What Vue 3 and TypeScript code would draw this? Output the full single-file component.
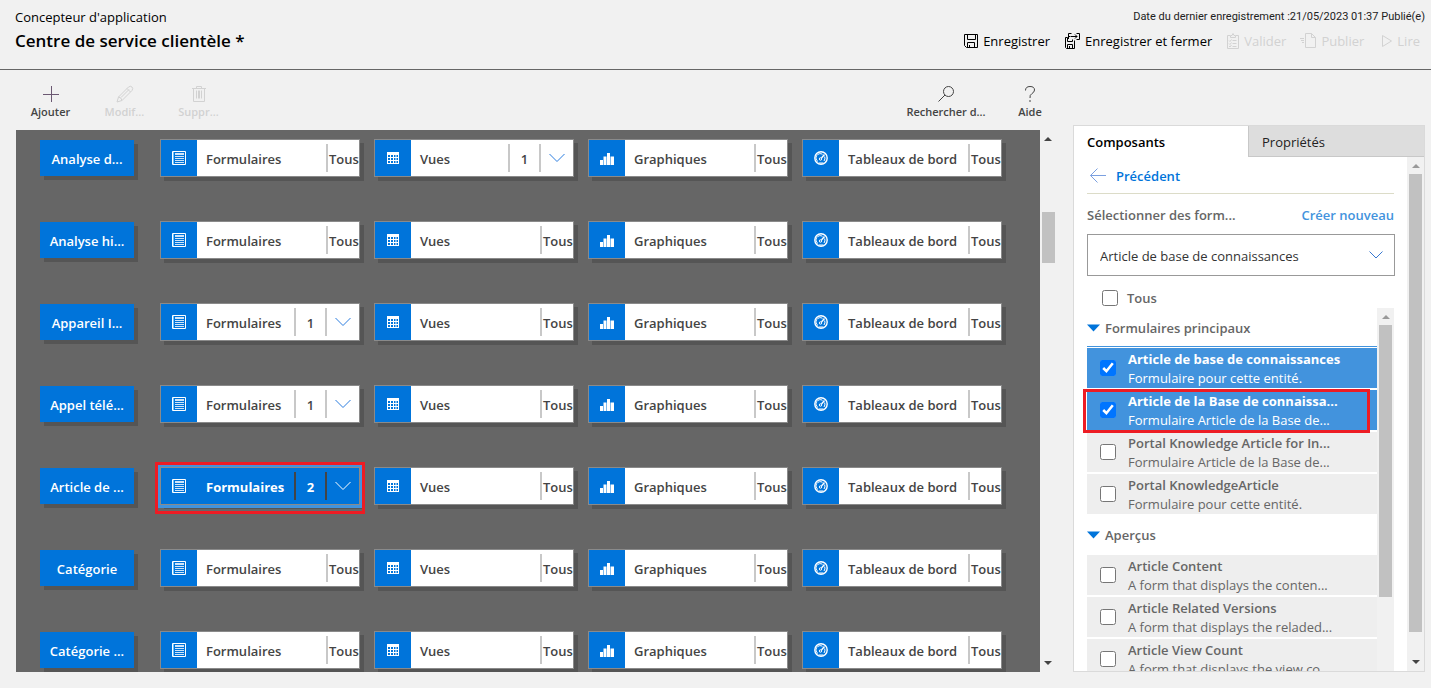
<script setup lang="ts">
import { ref } from 'vue'

type Kind = 'form' | 'view' | 'chart' | 'dash'

interface Card {
  kind: Kind
  label: string
  count?: number
  selected?: boolean
}

interface Row {
  name: string
  cards: Card[]
}

interface FormItem {
  title: string
  text: string
  checked: boolean
  marked?: boolean
  focused?: boolean
}

interface Group {
  name: string
  items: FormItem[]
}

function makeRow(name: string, forms?: number, views?: number, selected = false): Row {
  return {
    name,
    cards: [
      { kind: 'form', label: 'Formulaires', count: forms, selected },
      { kind: 'view', label: 'Vues', count: views },
      { kind: 'chart', label: 'Graphiques' },
      { kind: 'dash', label: 'Tableaux de bord' },
    ],
  }
}

const rows: Row[] = [
  makeRow('Analyse d...', undefined, 1),
  makeRow('Analyse hi...'),
  makeRow('Appareil I...', 1),
  makeRow('Appel télé...', 1),
  makeRow('Article de ...', 2, undefined, true),
  makeRow('Catégorie'),
  makeRow('Catégorie ...'),
]

const groups = ref<Group[]>([
  {
    name: 'Formulaires principaux',
    items: [
      { title: 'Article de base de connaissances', text: 'Formulaire pour cette entité.', checked: true, focused: true },
      { title: 'Article de la Base de connaissa...', text: 'Formulaire Article de la Base de...', checked: true, marked: true },
      { title: 'Portal Knowledge Article for In...', text: 'Formulaire Article de la Base de...', checked: false },
      { title: 'Portal KnowledgeArticle', text: 'Formulaire pour cette entité.', checked: false },
    ],
  },
  {
    name: 'Aperçus',
    items: [
      { title: 'Article Content', text: 'A form that displays the conten...', checked: false },
      { title: 'Article Related Versions', text: 'A form that displays the reladed...', checked: false },
      { title: 'Article View Count', text: 'A form that displays the view co...', checked: false },
    ],
  },
])

const all = ref(false)
const entity = ref('Article de base de connaissances')
</script>

<template>
  <div class="app">
    <header class="header">
      <div class="titles">
        <p class="product">Concepteur d'application</p>
        <h1 class="title">Centre de service clientèle *</h1>
      </div>
      <div class="header-right">
        <p class="saved">Date du dernier enregistrement :21/05/2023 01:37 Publié(e)</p>
        <div class="commands">
          <button class="command" type="button">
            <svg width="16" height="16" viewBox="0 0 16 16" fill="none" stroke="currentColor">
              <path d="M1.5 1.5h13v13h-11l-2-2zM4.500 1.500v5h8v-5M4.500 14.500v-5h7v5M6.500 12v2.500" />
            </svg>
            Enregistrer
          </button>
          <button class="command" type="button">
            <svg width="17" height="17" viewBox="0 0 17 17" fill="none" stroke="currentColor">
              <path d="M3.500 4.500h-2v10l1 1h8v-8M3.500 4.500v4h5v-2M3.500 15.500v-4h5v4M5.500 13v2.500M4.500 6V.500h3M4.500 3.500h2M12.500 .500h3v6h-3M7 3.500h6M11 1.500l2 2-2 2" />
            </svg>
            Enregistrer et fermer
          </button>
          <button class="command" type="button" disabled>
            <svg width="14" height="16" viewBox="0 0 14 16" fill="none" stroke="currentColor">
              <path d="M4 2.500H1.500v13h11v-13H10M4.500 4.500v-2h1.500l1-2 1 2h1.500v2zM3 7.500l1 1 1.500-2M6.500 7.500h4M3 10.500l1 1 1.500-2M6.500 10.500h4M3 13l1 1 1.500-2M6.500 13.500h4" />
            </svg>
            Valider
          </button>
          <button class="command" type="button" disabled>
            <svg width="17" height="16" viewBox="0 0 17 16" fill="none" stroke="currentColor">
              <path d="M5.500 .500h6l4 4v10h-10zM11.500 .500v4h4M0 5.500h4M1 7.500h3M2 9.500h2" />
            </svg>
            Publier
          </button>
          <button class="command play" type="button" disabled>
            <svg width="12" height="14" viewBox="0 0 12 14" fill="none" stroke="currentColor">
              <path d="M1.500 1.500v11l9-5.500z" />
            </svg>
            Lire
          </button>
        </div>
      </div>
    </header>

    <main class="main">
      <section class="work">
        <div class="toolbar">
          <button class="tool" type="button">
            <svg width="18" height="18" viewBox="0 0 18 18" fill="none" stroke="#6b5872">
              <path d="M1 9.500h16M9.500 1v16" />
            </svg>
            Ajouter
          </button>
          <button class="tool" type="button" disabled>
            <svg width="18" height="18" viewBox="0 0 18 18" fill="none" stroke="currentColor">
              <path d="M1 17l1.500-5L12.500 2q2-1.500 3.500 0t0 3.500L6 15.500zM11 3.500l3.500 3.500M2.500 12q3 .5 3.500 3.500M5 12.500l8-8" />
            </svg>
            Modif...
          </button>
          <button class="tool" type="button" disabled>
            <svg width="18" height="18" viewBox="0 0 18 18" fill="none" stroke="currentColor">
              <path d="M2 3.500h14M3.500 3.500v13h11v-13M6.500 3v-1.500h5V3M6.500 5.500v8M8.500 5.500v8M9.500 5.500v8M11.500 5.500v8" />
            </svg>
            Suppr...
          </button>
          <button class="tool wide" type="button">
            <svg width="18" height="18" viewBox="0 0 18 18" fill="none" stroke="currentColor">
              <circle cx="11.500" cy="6.500" r="5" /><path d="M8 10L1.500 16.500" />
            </svg>
            Rechercher d...
          </button>
          <button class="tool narrow" type="button">
            <svg width="18" height="18" viewBox="0 0 18 18" fill="none" stroke="currentColor">
              <path d="M4.500 5.500q0-4 4.500-4t4.500 3.500q0 2-2.500 3.500T9 13M9 15v2" />
            </svg>
            Aide
          </button>
        </div>

        <div class="canvas-wrap">
          <div class="canvas">
            <div v-for="row in rows" :key="row.name" class="row">
              <button class="entity" type="button">{{ row.name }}</button>
              <div
                v-for="card in row.cards"
                :key="card.kind"
                class="card"
                :class="{ selected: card.selected }"
              >
                <span class="card-icon">
                  <svg v-if="card.kind === 'form'" width="14" height="14" viewBox="0 0 14 14">
                    <path d="M.5.5h13v13H.5z" fill="none" stroke="#fff" />
                    <path d="M1.500 1v12" stroke="#6cc4ff" />
                    <path d="M3 2.500h9M3 3.500h9M3 5.500h9M3 7.500h9M3 9.500h9M3 11.500h9" stroke="#cfe5fa" />
                  </svg>
                  <svg v-else-if="card.kind === 'view'" width="12" height="12" viewBox="0 0 12 12">
                    <path d="M0 0h12v12H0z" fill="#fff" />
                    <path d="M1 3h2v2H1zM4 3h2v2H4zM7 3h1.500v2H7zM9.500 3H11v2H9.500zM1 6h2v2H1zM4 6h2v2H4zM7 6h1.500v2H7zM9.500 6H11v2H9.500zM1 9h2v2H1zM4 9h2v2H4zM7 9h1.500v2H7zM9.500 9H11v2H9.500z" fill="#0074da" />
                  </svg>
                  <svg v-else-if="card.kind === 'chart'" width="14" height="14" viewBox="0 0 14 14" fill="#fff">
                    <path d="M0 9h3v5H0zM3.500 5.500h3V14h-3zM7 2h3v12H7zM10.500 5.500H14V14h-3.500z" />
                  </svg>
                  <svg v-else width="14" height="14" viewBox="0 0 14 14" fill="none" stroke="#fff">
                    <circle cx="7" cy="7" r="6.200" stroke-width="1.400" />
                    <path d="M4 10.500A4 4 0 0 1 8.500 3.300M10.700 5.500Q11.500 8 10 10M4.500 12h5" />
                    <circle cx="6.500" cy="8" r="1.200" /><path d="M7.500 7L10.500 3.500" stroke-width="1.400" />
                  </svg>
                </span>
                <span class="card-label">{{ card.label }}</span>
                <template v-if="card.count">
                  <span class="count">{{ card.count }}</span>
                  <button class="expand" type="button" :aria-label="'Développer ' + card.label">
                    <svg width="18" height="10" viewBox="0 0 18 10" fill="none" stroke="currentColor">
                      <path d="M1.500 1l7.500 7.500L16.500 1" />
                    </svg>
                  </button>
                </template>
                <span v-else class="tous">Tous</span>
              </div>
            </div>
          </div>
          <div class="bar canvas-bar"><i class="up dark"></i><i class="thumb"></i><i class="down"></i></div>
        </div>
      </section>

      <aside class="panel">
        <nav class="tabs">
          <button class="tab active" type="button">Composants</button>
          <button class="tab" type="button">Propriétés</button>
        </nav>
        <div class="panel-body">
          <div class="panel-content">
            <a class="back" href="#">
              <svg width="18" height="16" viewBox="0 0 18 16" fill="none" stroke="#7ba0e0">
                <path d="M17 7.500H1.500M8.500 .500l-7 7 7 7" />
              </svg>
              Précédent
            </a>
            <div class="choose">
              <label for="entity">Sélectionner des form...</label>
              <a class="create" href="#">Créer nouveau</a>
            </div>
            <div class="select-wrap">
              <select id="entity" v-model="entity">
                <option>Article de base de connaissances</option>
              </select>
              <svg class="select-arrow" width="14" height="8" viewBox="0 0 14 8" fill="none" stroke="#3878d0">
                <path d="M.5.5L7 7l6.500-6.500" />
              </svg>
            </div>
            <label class="all"><input v-model="all" type="checkbox" />Tous</label>
            <div class="list-wrap">
              <div class="list">
                <section v-for="group in groups" :key="group.name" class="group">
                  <h2 class="group-name">
                    <svg width="13" height="8" viewBox="0 0 13 8"><path d="M0 .500h13L6.500 7.500z" fill="#0074da" /></svg>
                    {{ group.name }}
                  </h2>
                  <label
                    v-for="item in group.items"
                    :key="item.title"
                    class="item"
                    :class="{ checked: item.checked, marked: item.marked, focused: item.focused }"
                  >
                    <input v-model="item.checked" type="checkbox" />
                    <span class="item-text"><b>{{ item.title }}</b><span>{{ item.text }}</span></span>
                  </label>
                </section>
              </div>
              <div class="bar list-bar"><i class="up"></i><i class="thumb"></i></div>
            </div>
          </div>
          <div class="bar panel-bar"><i class="up"></i><i class="thumb"></i><i class="down"></i></div>
        </div>
      </aside>
    </main>
  </div>
</template>

<style>
body {
  background: #f1f1f1;
}
</style>

<style scoped>
* {
  box-sizing: border-box;
}
.app {
  display: flex;
  flex-direction: column;
  height: 100vh;
  overflow: hidden;
  color: #444;
  font: 13px/20px "Open Sans", "Noto Sans", sans-serif;
}
button {
  margin: 0;
  padding: 0;
  border: 0;
  background: none;
  color: inherit;
  font: inherit;
}
a {
  text-decoration: none;
}
svg {
  flex: none;
}
p,
h1,
h2 {
  margin: 0;
}
input {
  width: 16px;
  height: 16px;
  margin: 0;
  flex: none;
}

.header {
  display: flex;
  justify-content: space-between;
  flex: none;
  height: 70px;
  padding: 7px 6px 0 15px;
  border-bottom: 1px solid #666;
  color: #000;
}
.title {
  font-size: 17px;
  font-weight: 600;
  line-height: 28px;
}
.header-right {
  text-align: right;
}
.saved {
  color: #222;
  font-family: Roboto, "Open Sans", sans-serif;
  font-size: 11px;
}
.commands {
  display: flex;
  justify-content: flex-end;
  gap: 14px;
  padding: 4px 5px 0 0;
}
.command {
  display: flex;
  align-items: center;
  gap: 4px;
}
.command:disabled,
.tool:disabled {
  color: #d2d2d2;
}
.play {
  margin-left: 3px;
}

.main {
  display: grid;
  grid-template-columns: minmax(0, 1fr) 352px;
  gap: 17px;
  flex: 1;
  min-height: 0;
  padding: 0 6px 16px 16px;
}
.work {
  display: flex;
  flex-direction: column;
  min-height: 0;
}
.toolbar {
  display: flex;
  gap: 5px;
  height: 60px;
  flex: none;
  padding-top: 15px;
}
.tool {
  display: flex;
  flex-direction: column;
  align-items: center;
  width: 69px;
  font-size: 11px;
  font-weight: 600;
  line-height: 18px;
}
.wide {
  width: 84px;
  margin-left: auto;
  white-space: nowrap;
}
.narrow {
  width: 52px;
  margin-left: 11px;
}
.canvas-wrap {
  display: flex;
  flex: 1;
  min-height: 0;
}
.canvas {
  display: flex;
  flex: 1;
  flex-direction: column;
  gap: 44px;
  overflow: hidden;
  padding: 9px 24px 0;
  background: #666;
}
.row {
  display: flex;
  align-items: center;
  gap: 14px;
  flex: none;
}
.entity {
  width: 94px;
  height: 36px;
  margin-right: 12px;
  padding-top: 2px;
  background: #0074da;
  box-shadow: 4px 4px #555;
  color: #fff;
  font-weight: 600;
}
.card {
  display: flex;
  align-items: center;
  width: 200px;
  height: 38px;
  border: 1px solid #8a8a8a;
  background: #fff;
  box-shadow: 4px 4px #555;
  font-weight: 600;
}
.card-icon {
  display: flex;
  align-items: center;
  justify-content: center;
  width: 36px;
  height: 36px;
  background: #0074da;
}
.card-label {
  flex: 1;
  padding: 2px 0 0 9px;
  white-space: nowrap;
}
.tous,
.count,
.expand {
  height: 28px;
  border-left: 2px solid #c8c8c8;
  line-height: 30px;
}
.tous {
  width: 33px;
  padding-left: 1px;
}
.count {
  width: 31px;
  text-align: center;
}
.expand {
  display: flex;
  align-items: center;
  justify-content: center;
  width: 34px;
  color: #2b7de0;
}
.card.selected {
  position: relative;
  background: #0074da;
  color: #fff;
  font-weight: 700;
  box-shadow: 0 0 0 2px #4293dd, 0 1px 0 2px #4293dd, 4px 4px #555;
}
.card.selected::after {
  content: "";
  position: absolute;
  inset: -6px -6px -10px;
  border: 3px solid #ed1c24;
  pointer-events: none;
}
.selected .count,
.selected .expand {
  border-color: #444;
  color: #fff;
}

.bar {
  display: flex;
  flex-direction: column;
  align-items: center;
  flex: none;
  width: 17px;
  background: #f1f1f1;
}
.up,
.down {
  flex: none;
  width: 0;
  height: 4px;
  border: 4px solid transparent;
  border-top-width: 0;
  border-bottom: 4px solid #999;
}
.dark {
  border-bottom-color: #444;
}
.down {
  margin-top: auto;
  border-top: 4px solid #444;
  border-bottom-width: 0;
}
.thumb {
  width: 13px;
  background: #c1c1c1;
}
.canvas-bar {
  width: 16px;
  padding: 7px 0;
}
.canvas-bar .thumb {
  height: 51px;
  margin-top: 71px;
}

.panel {
  display: flex;
  flex-direction: column;
  min-height: 0;
  margin-top: 55px;
  border: 1px solid #dadada;
  background: #fff;
  color: #666;
}
.tabs {
  display: flex;
  flex: none;
  height: 31px;
}
.tab {
  flex: 1;
  padding: 2px 0 0 13px;
  border-bottom: 1px solid #c8c8c8;
  border-left: 1px solid #c8c8c8;
  background: #ddd;
  color: #222;
  text-align: left;
}
.tab.active {
  flex: 0 0 174px;
  padding-left: 12px;
  border-color: transparent;
  background: #fff;
  color: #000;
  font-weight: 600;
}
.panel-body {
  display: flex;
  flex: 1;
  justify-content: space-between;
  min-height: 0;
}
.panel-content {
  display: flex;
  flex: 1;
  flex-direction: column;
  min-height: 0;
  padding: 0 12px 0 13px;
}
.back {
  display: flex;
  align-items: center;
  gap: 9px;
  flex: none;
  height: 37px;
  margin-right: 1px;
  padding: 2px 0 0 2px;
  border-bottom: 1px solid #dcdcc8;
  color: #0074da;
  font-weight: 600;
}
.choose {
  display: flex;
  align-items: center;
  justify-content: space-between;
  flex: none;
  height: 40px;
  margin-right: 1px;
  padding-top: 2px;
  font-weight: 600;
}
.create {
  color: #4293dd;
}
.select-wrap {
  position: relative;
  flex: none;
}
select {
  display: block;
  width: 100%;
  height: 42px;
  padding: 2px 12px 0;
  border: 1px solid #999;
  border-radius: 0;
  appearance: none;
  background: #fff;
  color: #333;
  font: inherit;
}
.select-arrow {
  position: absolute;
  top: 17px;
  right: 12px;
  pointer-events: none;
}
.all {
  display: flex;
  align-items: center;
  gap: 9px;
  flex: none;
  height: 32px;
  padding: 12px 0 0 15px;
  font-weight: 600;
}
.list-wrap {
  display: flex;
  flex: 1;
  min-height: 0;
  margin: 0 1px 0 -4px;
}
.list {
  flex: 1;
  overflow: hidden;
  padding-left: 4px;
}
.group {
  display: flex;
  flex-direction: column;
  gap: 2px;
}
.group-name {
  display: flex;
  align-items: center;
  gap: 5px;
  height: 38px;
  padding-top: 2px;
  font-size: 13px;
  font-weight: 600;
}
.group + .group .group-name {
  height: 39px;
}
.item {
  position: relative;
  display: flex;
  align-items: center;
  gap: 12px;
  height: 40px;
  padding-left: 13px;
  background: #eee;
}
.item-text {
  display: flex;
  flex-direction: column;
  padding-top: 2px;
  line-height: 19px;
  white-space: nowrap;
}
.item b {
  font-weight: 600;
}
.item.checked {
  background: #4293dd;
  color: #fff;
}
.item.checked b {
  font-weight: 700;
}
.item.focused {
  box-shadow: 0 -1px #fff, 0 -2px #4293dd;
}
.item.marked {
  z-index: 1;
}
.marked::after {
  content: "";
  position: absolute;
  inset: -1px 7px -3px -4px;
  border: 3px solid #ed1c24;
  pointer-events: none;
}
.list-bar {
  padding-top: 7px;
}
.list-bar .thumb {
  height: 272px;
  margin-top: 6px;
}
.panel-bar {
  padding: 7px 0;
}
.panel-bar .thumb {
  height: 458px;
  margin-top: 6px;
}
</style>
